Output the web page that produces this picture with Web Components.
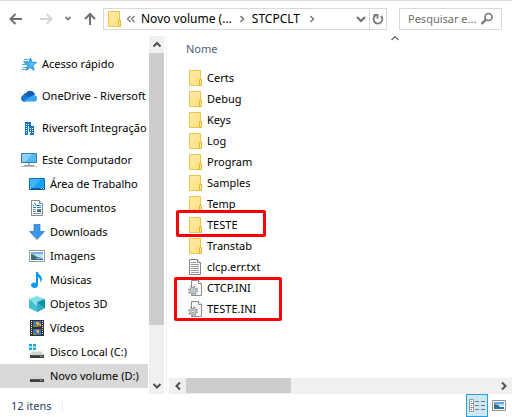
<!DOCTYPE html>
<html lang="pt-BR">
<head>
<meta charset="utf-8">
<meta name="viewport" content="width=device-width, initial-scale=1">
<title>STCPCLT</title>
<style>
html,body{margin:0;height:100%}
body{font:11px/20px "Noto Sans","Open Sans",sans-serif;color:#000;background:#fff}
</style>
</head>
<body>
<file-explorer>
  <address-bar slot="top"></address-bar>
  <nav-pane slot="nav">
    <nav-item icon="star">Acesso rápido</nav-item>
    <nav-item icon="cloud" gap>OneDrive - Riversoft</nav-item>
    <nav-item icon="building" gap>Riversoft Integração</nav-item>
    <nav-item icon="pc" gap>Este Computador</nav-item>
    <nav-item icon="desktop" child>Área de Trabalho</nav-item>
    <nav-item icon="document" child>Documentos</nav-item>
    <nav-item icon="download" child>Downloads</nav-item>
    <nav-item icon="image" child>Imagens</nav-item>
    <nav-item icon="music" child>Músicas</nav-item>
    <nav-item icon="cube" child>Objetos 3D</nav-item>
    <nav-item icon="video" child>Vídeos</nav-item>
    <nav-item icon="diskc" child>Disco Local (C:)</nav-item>
    <nav-item icon="disk" child selected>Novo volume (D:)</nav-item>
  </nav-pane>
  <file-list slot="files"></file-list>
  <status-bar slot="status">12 itens</status-bar>
</file-explorer>

<script>
const fold = '<defs><linearGradient id="f" x1="0" y1="0" x2="1" y2="1"><stop stop-color="#ffecaa"/><stop offset="1" stop-color="#ffe07d"/></linearGradient></defs><path fill="url(#f)" stroke="#e9c64c" d="M1.500.5h11v15h-11z"/><path fill="#ffe58e" stroke="#e3b92f" d="M11.500 9.500h2v6h-2z"/>';
const drive = '<path fill="#d3d3d3" d="M3 7.500h10l2 3.500H1z"/><path fill="#3d3d3d" d="M1 11h14v3H1z"/><path fill="#606060" d="M1 11h14v.7H1z"/><path fill="#2fe23b" d="M11 12h2v1h-2z"/>';
const gear = '<path fill="#f7f7f7" stroke="#8d8d8d" d="M3.500.5h7l3 3v12h-10z"/><path fill="#fff" stroke="#8d8d8d" d="M10.500.5v3h3"/><circle cx="5" cy="10.500" r="4.200" fill="none" stroke="#8a9096" stroke-width="1.600" stroke-dasharray="1.650 1.650"/><circle cx="5" cy="10.500" r="3.200" fill="#d3d8dc" stroke="#979da3"/><circle cx="5" cy="10.500" r="1.300" fill="#fff" stroke="#858b90" stroke-width=".8"/>';
const picture = '<path fill="#fff" stroke="#999" d="M.5 2.500h15v11H.5z"/><path fill="#75aeea" d="M2 4h12v4H2z"/><path fill="#b9def5" d="M2 6h12v3H2z"/><path fill="#39725d" d="M2 6l3 1 3 2 6 1v1H2z"/><path fill="#2d659d" d="M2 10h12v2H2z"/><path fill="#79b2d4" d="M7 10h7v1H7z"/>';
const ICONS = {
  folder: fold,
  text: '<path fill="#fafafa" stroke="#888" d="M1.500.5h8l3 3v12h-11z"/><path fill="#fff" stroke="#888" d="M9.500.5v3h3"/><path stroke="#9a9a9a" d="M3 3.500h5M3 5.500h8M3 7.500h8M3 9.500h8M3 11.500h8M3 13.500h8"/>',
  ini: gear,
  star: '<path fill="#42b4f5" stroke="#1581c9" stroke-width=".8" d="M9.500 2l1.500 4.300 4.600.1-3.800 3 1.300 4.800-4-2.600-3.900 2.600 1.300-4.600-3.300-3 4.500-.3z"/><path stroke="#2699df" d="M3 3.500h5M2 5.500h5M1 8.500h4M2 11.500h4M1 13.500h4" stroke-width=".8"/><path fill="#7bd0ff" d="M9.500 4l1 3.500 3 .1-3 1.700z"/>',
  cloud: '<path fill="#0f5fb5" d="M2 8a4 4 0 0 1 3-3A5 5 0 0 1 14 7l-6 3z"/><path fill="#1675ce" d="M0 10a3.500 3.500 0 0 1 5-3l7 4-8 2.800H3A3.500 3.500 0 0 1 0 10z"/><path fill="#33a6ee" d="M2 13.200L11 8a3 3 0 0 1 5 2.700 2.900 2.900 0 0 1-3 2.800H3z"/>',
  building: '<path fill="#1274c9" d="M4 2h6v4h3v9H9v-3H7v3H4z"/><path fill="#fff" d="M5 4h1v1H5zM7 4h1v1H7zM5 6h1v1H5zM5 8h1v1H5zM5 10h1v1H5zM9 8h1v1H9zM11 8h1v1h-1zM9 10h1v1H9zM11 10h1v1h-1zM9 12h1v1H9zM11 12h1v1h-1zM5 12h1v1H5zM7 6h1v9H7z"/>',
  pc: '<path fill="#56b9f5" stroke="#3c7da8" d="M.5 1.500h15v9H.5z"/><path fill="#8bd2fb" d="M1 2h10L4 10H1z"/><path fill="#a4bdcc" d="M7 11h2v2H7z"/><path fill="#8b9ba6" d="M3 13h10v1H3z"/><path fill="#b7c2ca" d="M0 14h16v1H0z"/>',
  desktop: '<path fill="#18a0f3" stroke="#0773bd" d="M.5 2.500h15v11H.5z"/><path fill="#42b5fb" d="M1 3h11L4 12H1z"/><path fill="#065b9d" d="M0 12h16v2H0z"/><path fill="#fff" d="M1 12h1v1H1zM12 12h1v1h-1zM14 12h1v1h-1z"/>',
  document: '<path fill="#fff" stroke="#888" d="M2.500.5h8l3 3v12h-11z"/><path fill="#eee" stroke="#888" d="M10.500.5v3h3"/><path stroke="#1b87c8" d="M4 5.500h1M5 3.500h1M5.500 3l2 3M8 5.500h4M4 7.500h3M8 7.500h4"/><path stroke="#8b9499" d="M4 9.500h3M4 11.500h3M4 13.500h8"/><path fill="#4186b1" d="M8 9h4v3H8z"/><path fill="#326552" d="M8 11h4v1H8z"/>',
  download: '<path fill="#3996e8" stroke="#2874bd" stroke-width=".7" d="M5 .5h6v7h4.500L8 15.500.5 7.500H5z"/>',
  image: picture,
  music: '<path fill="#069aef" d="M7 0h2c0 3 4 3 4 8l-2 3c1-3 0-5-2-6v8c0 4-7 4-7 0 0-2 3-3 5-2z"/>',
  cube: '<path fill="#81dfe9" d="M0 3l8-3 8 3-8 3z"/><path fill="#48bfd1" d="M0 3l8 3v10l-8-4z"/><path fill="#168eac" d="M16 3L8 6v10l8-4z"/><path fill="#8fe3ea" d="M0 3l8 3v4z"/><path fill="#30abc3" d="M8 6l8 6-8 4z"/>',
  video: '<path fill="#303030" d="M1 0h14v16H1z"/><path stroke="#eee" stroke-dasharray="1 1" d="M2.500 1v14M13.500 1v14"/><path fill="#3e70c3" d="M4 1h8v6H4zM4 9h8v6H4z"/><path fill="#e9b739" d="M7 2h3v2h2v2H8V4H7zM7 10h3v3H8z"/><path fill="#6d9637" d="M4 5h4v2H4zM4 13h3v2H4z"/><path fill="#b74b35" d="M9 5h2v2H9z"/>',
  diskc: drive + '<path fill="#12aaf1" d="M0 0h3v2.500H0zM4 0h3v2.500H4zM0 3.500h3V6H0zM4 3.500h3V6H4z"/>',
  disk: drive,
  back: '<path fill="none" stroke="#707070" stroke-width="2" d="M14 8H3M7.500 3L2.500 8l5 5"/>',
  forward: '<path fill="none" stroke="#d6d6d6" stroke-width="2" d="M2 8h11M8.500 3l5 5-5 5"/>',
  up: '<path fill="none" stroke="#707070" stroke-width="2" d="M8 14V3M3 8l5-5 5 5"/>',
  small: '<path fill="none" stroke="#808080" stroke-width="1.800" d="M5.500 6L8 8.500 10.500 6"/>',
  down: '<path fill="none" stroke="#707070" stroke-width="2" d="M4 6l4 4 4-4"/>',
  right: '<path fill="none" stroke="#777" stroke-width="1.500" d="M6.500 5L9.500 8l-3 3"/>',
  rewind: '<path fill="none" stroke="#777" stroke-width="1.300" d="M7.500 5L4.500 8l3 3M11.500 5l-3 3 3 3"/>',
  refresh: '<path fill="none" stroke="#777" stroke-width="1.800" d="M5.500 4.500A4.400 4.400 0 1 0 11 5M3.500 3.800h4v4"/>',
  search: '<circle cx="9.500" cy="6" r="3.500" fill="none" stroke="#777" stroke-width="1.700"/><path stroke="#777" stroke-width="2.300" d="M7 8.700L2.500 13"/>',
  sort: '<path fill="none" stroke="#666" stroke-width="1.200" d="M4.500 9L8 5.500l3.500 3.500"/>',
  sbup: '<path fill="none" stroke="#505050" stroke-width="2" d="M4.500 9.500L8 6l3.500 3.500"/>',
  sbdown: '<path fill="none" stroke="#505050" stroke-width="2" d="M4.500 6L8 9.500 11.500 6"/>',
  sbleft: '<path fill="none" stroke="#505050" stroke-width="2" d="M10 4.500L6.500 8l3.500 3.500"/>',
  sbright: '<path fill="none" stroke="#505050" stroke-width="2" d="M6 4.500L9.500 8 6 11.500"/>',
  details: '<path fill="#fff" stroke="#999" d="M.5 1.500h4v4h-4zM.5 5.500h4v4h-4zM.5 9.500h4v4h-4z"/><path fill="#4f7e66" d="M2 3h1v1H2z"/><path fill="#3d79c9" d="M2 7h1v1H2z"/><path fill="#c32929" d="M2 11h1v1H2z"/><path stroke="#777" d="M6 3.500h4M12 3.500h4M6 7.500h4M12 7.500h4M6 11.500h4M12 11.500h4"/>',
  thumb: '<path fill="#fff" stroke="#909090" d="M1.500 2.500h13v10h-13z"/><path fill="#62a8ed" d="M3 4h10v4H3z"/><path fill="#b5daf0" d="M3 6h10v2H3z"/><path fill="#397863" d="M3 6l4 1 2 2H3z"/><path fill="#326da9" d="M3 9h10v2H3z"/>'
};

const base = `<style>
*,*::before,*::after{box-sizing:border-box}
button{font:inherit;color:inherit;margin:0;padding:0;border:0;background:none;display:flex;align-items:center;justify-content:center}
a{color:inherit;text-decoration:none}
</style>`;
function define(name, render){
  customElements.define(name, class extends HTMLElement{
    constructor(){ super(); this.attachShadow({mode:'open'}); }
    connectedCallback(){ this.shadowRoot.innerHTML = base + render(this); }
  });
}

define('ui-icon', el => `<style>:host{display:block;flex:none;width:16px;height:16px}svg{display:block}</style>
<svg width="16" height="16" viewBox="0 0 16 16" aria-hidden="true">${ICONS[el.getAttribute('name')]}</svg>`);

define('scroll-bar', el => {
  const h = el.hasAttribute('horizontal');
  return `<style>
:host{display:flex;flex-direction:${h?'row':'column'};background:#f0f0f0;${h?'height:16px':'width:15px'}}
button{${h?'width:17px;height:16px':'width:15px;height:17px'};flex:none;overflow:hidden}
.track{flex:1;min-width:0;min-height:0}
.thumb{background:#cdcdcd;${h?'width:34%;height:15px':'height:84%'}}
</style>
<button aria-label="${h?'Rolar para a esquerda':'Rolar para cima'}"><ui-icon name="${h?'sbleft':'sbup'}"></ui-icon></button>
<div class="track"><div class="thumb"></div></div>
<button aria-label="${h?'Rolar para a direita':'Rolar para baixo'}"><ui-icon name="${h?'sbright':'sbdown'}"></ui-icon></button>`;
});

define('file-explorer', () => `<style>
:host{display:grid;grid-template-rows:36px minmax(0,1fr) 23px;height:100vh;overflow:hidden}
main{display:grid;grid-template-columns:167px minmax(0,1fr);min-height:0}
</style>
<slot name="top"></slot><main><slot name="nav"></slot><slot name="files"></slot></main><slot name="status"></slot>`);

define('address-bar', () => `<style>
:host{display:flex;align-items:center;border-top:1px solid #d9d9d9;padding:0 10px 0 8px}
.nav{display:flex;align-items:center;width:95px;gap:14px}
.nav button:nth-child(3){margin:0 -8px}
.box{display:flex;align-items:center;height:22px;border:1px solid #d9d9d9;min-width:0}
.path{flex:1;padding-left:3px;white-space:nowrap;font-size:12px}
.path .last{flex:1;display:flex;align-items:center;gap:2px}
.crumb{padding:0 2px}
.refresh{width:17px;height:20px;border-left:1px solid #d9d9d9}
.search{width:103px;margin-left:12px;padding:0 6px 0 8px}
input{flex:1;min-width:0;width:0;border:0;padding:0;outline:0;background:none;font:inherit;color:#6d6d6d;appearance:none}
input::-webkit-search-cancel-button{display:none}
input::placeholder{color:#6d6d6d;opacity:1}
</style>
<div class="nav">
<button aria-label="Voltar"><ui-icon name="back"></ui-icon></button>
<button aria-label="Avançar"><ui-icon name="forward"></ui-icon></button>
<button aria-label="Locais recentes"><ui-icon name="small"></ui-icon></button>
<button aria-label="Acima"><ui-icon name="up"></ui-icon></button>
</div>
<div class="box path"><ui-icon name="folder"></ui-icon>
<button aria-label="Locais anteriores"><ui-icon name="rewind"></ui-icon></button>
<a class="crumb" href="#d">Novo volume (...</a><ui-icon name="right"></ui-icon>
<div class="last"><a class="crumb" href="#stcpclt">STCPCLT</a><ui-icon name="right"></ui-icon></div>
<button aria-label="Histórico"><ui-icon name="down"></ui-icon></button>
<button class="refresh" aria-label="Atualizar"><ui-icon name="refresh"></ui-icon></button></div>
<div class="box search"><input type="search" aria-label="Pesquisar" placeholder="Pesquisar e..."><ui-icon name="search"></ui-icon></div>`);

define('nav-pane', () => `<style>
:host{display:flex;min-height:0;border-right:1px solid #f0f0f0}
nav{flex:1;min-width:0;padding-top:16px;overflow:hidden;margin-right:1px}
scroll-bar{margin-right:2px}
</style><nav><slot></slot></nav><scroll-bar></scroll-bar>`);

define('nav-item', el => `<style>
:host{display:block}
:host([gap]){margin-top:8px}
a{display:flex;align-items:center;gap:5px;height:24px;padding-left:21px;white-space:nowrap;overflow:hidden}
:host([child]) a{padding-left:29px}
:host([selected]) a{background:#d9d9d9}
</style><a href="#${el.getAttribute('icon')}"><ui-icon name="${el.getAttribute('icon')}"></ui-icon><slot></slot></a>`);

const groups = [
  {rows:[['folder','Certs'],['folder','Debug'],['folder','Keys'],['folder','Log'],['folder','Program'],['folder','Samples'],['folder','Temp']]},
  {mark:'one',rows:[['folder','TESTE']]},
  {rows:[['folder','Transtab'],['text','clcp.err.txt']]},
  {mark:'two',rows:[['ini','CTCP.INI'],['ini','TESTE.INI']]}
];
define('file-list', () => `<style>
:host{display:flex;flex-direction:column;min-width:0;min-height:0;padding-left:2px}
.view{flex:1;min-height:0;overflow:hidden}
table{width:100%;border-collapse:collapse}
th{height:31px;padding:0 0 6px 17px;text-align:left;font-weight:400;color:#4c607a;position:relative}
th ui-icon{position:absolute;top:-5px;left:calc(66% - 8px)}
td{height:21px;padding:0 0 0 19px}
td div{display:flex;align-items:center;gap:3px;height:21px}
tbody{position:relative}
tbody.one::after,tbody.two::after{content:"";position:absolute;border:3px solid #fc0008;border-radius:2px}
tbody.one::after{left:7px;top:-4px;width:90px;height:27px}
tbody.two::after{left:5px;top:0;width:108px;height:44px}
</style>
<div class="view"><table><thead><tr><th scope="col"><span>Nome</span><ui-icon name="sort"></ui-icon></th></tr></thead>
${groups.map(g => `<tbody class="${g.mark||''}">${g.rows.map(r => `<tr><td><div><ui-icon name="${r[0]}"></ui-icon><span>${r[1]}</span></div></td></tr>`).join('')}</tbody>`).join('')}
</table></div><scroll-bar horizontal></scroll-bar>`);

define('status-bar', () => `<style>
:host{display:flex;align-items:center;color:#2a3f5f;padding:0 5px 0 11px}
.count{padding-right:10px;border-right:1px solid #ececec;line-height:12px;margin-right:auto}
button{width:22px;height:23px}
.on{background:#cce8f6;border:1px solid #26a0da}
.thumb{margin-left:2px;width:17px}
</style><span class="count"><slot></slot></span>
<button class="on" aria-label="Detalhes" aria-pressed="true"><ui-icon name="details"></ui-icon></button>
<button class="thumb" aria-label="Ícones grandes" aria-pressed="false"><ui-icon name="thumb"></ui-icon></button>`);
</script>
</body>
</html>
